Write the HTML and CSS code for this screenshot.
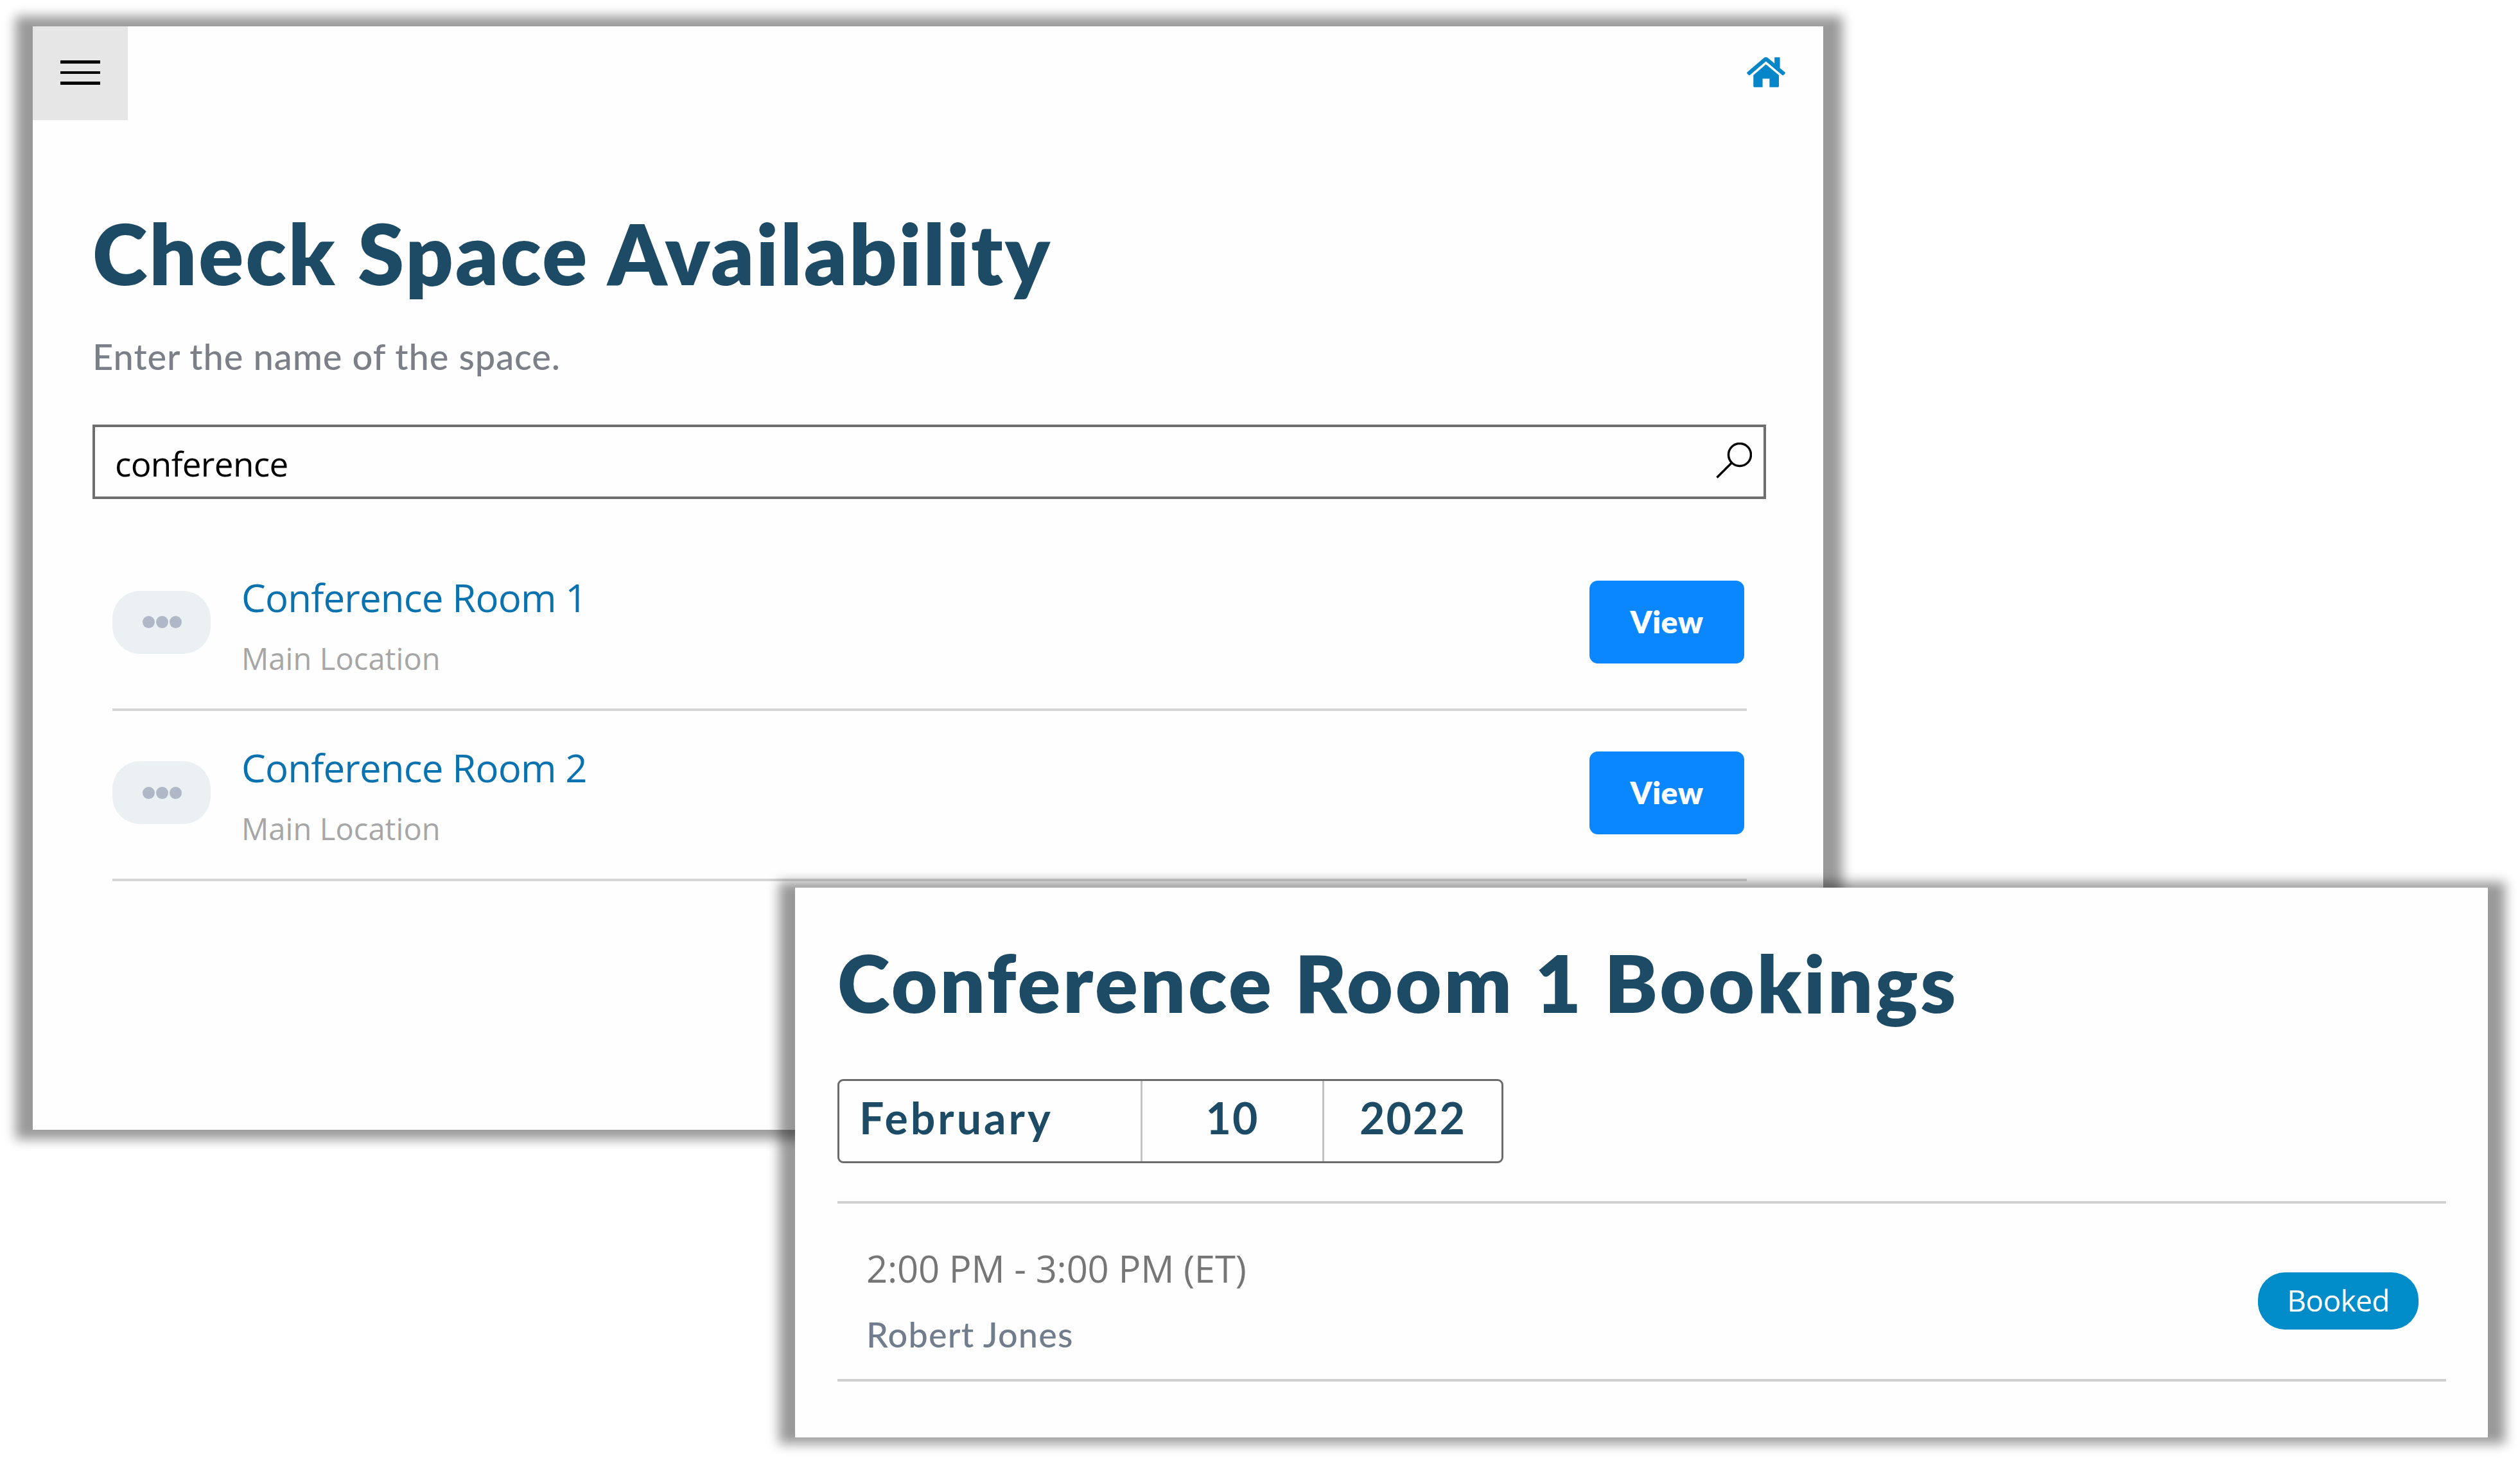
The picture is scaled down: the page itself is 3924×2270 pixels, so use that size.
FILE: index.html
```html
<!DOCTYPE html>
<html lang="en">
<head>
    <meta charset="UTF-8">
    <meta name="viewport" content="width=device-width, initial-scale=1.0">
    <title>Check Space Availability</title>
    <link rel="stylesheet" href="styles.css">
</head>
<body>
    <div class="panel search-panel">
        <div class="topbar">
            <button class="menu-button" type="button" aria-label="Menu">
                <span class="menu-bar"></span>
                <span class="menu-bar"></span>
                <span class="menu-bar"></span>
            </button>
            <a class="home-link" href="#" aria-label="Home">
                <svg class="home-icon" viewBox="0 0 60 47">
                    <path d="M26.5 1.2Q29.8-1.2 33 1.2L43.2 9.8V.3H51.6V17L59.2 23.2Q60.6 24.4 59.4 25.8L57.4 27.8Q56.2 28.8 55 27.8L29.8 6.4 5 27.8Q4 28.8 2.8 27.8L.8 25.8Q-.4 24.4.8 23.2Z"/>
                    <path d="M29.8 11.2L50 28V45.2Q50 46.8 48.2 46.8H35.4V33.5H24.6V46.8H12Q10.3 46.8 10.3 45.2V28Z"/>
                </svg>
            </a>
        </div>

        <div class="search-content">
            <h1 class="search-title">Check Space Availability</h1>
            <p class="hint">Enter the name of the space.</p>

            <div class="search-box">
                <span class="search-text">conference</span>
                <svg class="search-icon" viewBox="0 0 56 56">
                    <circle cx="37" cy="19" r="17.5"/>
                    <path d="M24.5 31.5L1.5 54.5"/>
                </svg>
            </div>

            <div class="room-list">
                <div class="room">
                    <div class="more"><i></i><i></i><i></i></div>
                    <div class="room-info">
                        <a class="room-name" href="#">Conference Room 1</a>
                        <div class="room-location">Main Location</div>
                    </div>
                    <button class="view-button" type="button">View</button>
                </div>
                <div class="room">
                    <div class="more"><i></i><i></i><i></i></div>
                    <div class="room-info">
                        <a class="room-name" href="#">Conference Room 2</a>
                        <div class="room-location">Main Location</div>
                    </div>
                    <button class="view-button" type="button">View</button>
                </div>
            </div>
        </div>
    </div>

    <div class="panel bookings-panel">
        <h1 class="bookings-title">Conference Room 1 Bookings</h1>

        <div class="date-picker">
            <div class="month">February</div>
            <div class="day">10</div>
            <div class="year">2022</div>
        </div>

        <div class="booking">
            <div class="booking-info">
                <div class="booking-time">2:00 PM - 3:00 PM (ET)</div>
                <div class="booking-name">Robert Jones</div>
            </div>
            <div class="status">Booked</div>
        </div>
    </div>
</body>
</html>
```

FILE: styles.css
```css
* {
    margin: 0;
    padding: 0;
    box-sizing: border-box;
}

body {
    width: 3924px;
    height: 2270px;
    position: relative;
    overflow: hidden;
    background-color: #fff;
    font-family: 'Open Sans', 'Noto Sans', sans-serif;
}

button {
    border: none;
    font: inherit;
    cursor: pointer;
}

a {
    text-decoration: none;
}

/* Overlapping windows */
.panel {
    position: absolute;
}

/* Soft shadow, wider at the sides than above and below */
.panel::before {
    content: '';
    position: absolute;
    z-index: -1;
    background-color: rgba(0, 0, 0, 0.4);
    filter: blur(9px);
}

/* Window surface, over its own shadow */
.panel::after {
    content: '';
    position: absolute;
    inset: 0;
    z-index: -1;
    background-color: #fefefe;
}

.search-panel {
    left: 51px;
    top: 41px;
    width: 2788px;
    height: 1718px;
    z-index: 0;
}

.search-panel::before {
    inset: -16px -30px -15px -27px;
}

.bookings-panel {
    left: 1238px;
    top: 1382px;
    width: 2636px;
    height: 856px;
    padding: 72px 65px 0 66px;
    z-index: 1;
}

.bookings-panel::before {
    inset: -9px -27px -10px -25px;
}

/* Search window */
.topbar {
    display: flex;
    justify-content: space-between;
    align-items: flex-start;
    height: 146px;
}

.menu-button {
    display: flex;
    flex-direction: column;
    align-items: center;
    gap: 12px;
    width: 148px;
    height: 146px;
    padding-top: 53px;
    background-color: #e6e6e6;
}

.menu-bar {
    width: 62px;
    height: 4.5px;
    background-color: #000;
}

.home-link {
    margin: 48px 59px 0 0;
}

.home-icon {
    display: block;
    width: 60px;
    height: 47px;
    fill: #0586c8;
}

.search-content {
    padding: 132px 89px 0 93px;
}

h1 {
    font-family: 'Lato', sans-serif;
    font-weight: 800;
    line-height: 150px;
    color: #1d4a64;
    white-space: nowrap;
}

.search-title {
    font-size: 130px;
    letter-spacing: 3px;
}

.hint {
    margin-top: 51px;
    font-family: 'Lato', sans-serif;
    font-size: 56px;
    font-weight: 500;
    line-height: 70px;
    letter-spacing: 0.93px;
    color: #7b7f87;
}

.search-box {
    display: flex;
    justify-content: space-between;
    align-items: flex-start;
    height: 116px;
    margin-top: 71px;
    padding: 20px 18px 0 31px;
    border: 4px solid #6e6e6e;
}

.search-text {
    font-size: 53px;
    line-height: 74px;
    letter-spacing: -0.7px;
    color: #000;
}

.search-icon {
    width: 56px;
    height: 56px;
    margin-top: 4px;
    fill: none;
    stroke: #000;
    stroke-width: 3.5;
}

.room-list {
    margin: 64px 30px 0 31px;
}

.room {
    display: flex;
    align-items: center;
    height: 265.5px;
    padding-bottom: 6px;
    border-bottom: 4px solid #d5d5d5;
}

.more {
    display: flex;
    justify-content: center;
    align-items: center;
    gap: 2px;
    width: 153px;
    height: 98px;
    padding-left: 2px;
    border-radius: 43px;
    background-color: #ebf0f3;
}

.more i {
    width: 19px;
    height: 19px;
    border-radius: 50%;
    background-color: #b0b8c8;
}

.room-info {
    flex: 1;
    margin-left: 48px;
    padding-top: 7px;
}

.room-name {
    display: block;
    font-size: 60px;
    line-height: 80px;
    letter-spacing: -0.85px;
    color: #0b72b0;
}

.room-location {
    margin-top: 25px;
    font-size: 47px;
    line-height: 60px;
    letter-spacing: 0.1px;
    color: #a6a6a6;
}

.view-button {
    width: 241px;
    height: 129px;
    margin-right: 4px;
    padding-bottom: 2px;
    border-radius: 13px;
    background-color: #0a86ff;
    font-family: 'Lato', sans-serif;
    font-size: 48px;
    font-weight: 800;
    letter-spacing: 0.6px;
    color: #fff;
}

/* Bookings window */
.bookings-title {
    font-size: 124px;
    letter-spacing: 3.75px;
}

.date-picker {
    display: flex;
    width: 1037px;
    height: 131px;
    margin-top: 76px;
    border: 3px solid #6b6b6b;
    border-radius: 9px;
    font-family: 'Lato', sans-serif;
    font-size: 68px;
    font-weight: 700;
    line-height: 113px;
    letter-spacing: 2px;
    text-align: center;
    color: #1d4a64;
}

.month {
    width: 472px;
    padding-left: 31px;
    border-right: 3px solid #c2c2c2;
    letter-spacing: 4px;
    text-align: left;
}

.day {
    width: 283px;
    border-right: 3px solid #c2c2c2;
}

.year {
    flex: 1;
}

.booking {
    display: flex;
    justify-content: space-between;
    align-items: flex-start;
    height: 281px;
    margin-top: 59px;
    padding: 61px 43px 0 45px;
    border-top: 4px solid #d0d0d0;
    border-bottom: 4px solid #d0d0d0;
}

.booking-time {
    font-size: 58px;
    line-height: 80px;
    letter-spacing: -0.2px;
    color: #767676;
}

.booking-name {
    margin-top: 28px;
    font-family: 'Lato', sans-serif;
    font-size: 54px;
    font-weight: 500;
    line-height: 70px;
    letter-spacing: 1.2px;
    color: #717d8c;
}

.status {
    width: 250px;
    height: 89px;
    margin-top: 46px;
    border-radius: 42px;
    background-color: #008bc9;
    font-size: 46px;
    line-height: 86px;
    letter-spacing: -0.6px;
    text-align: center;
    color: #fff;
}
```
